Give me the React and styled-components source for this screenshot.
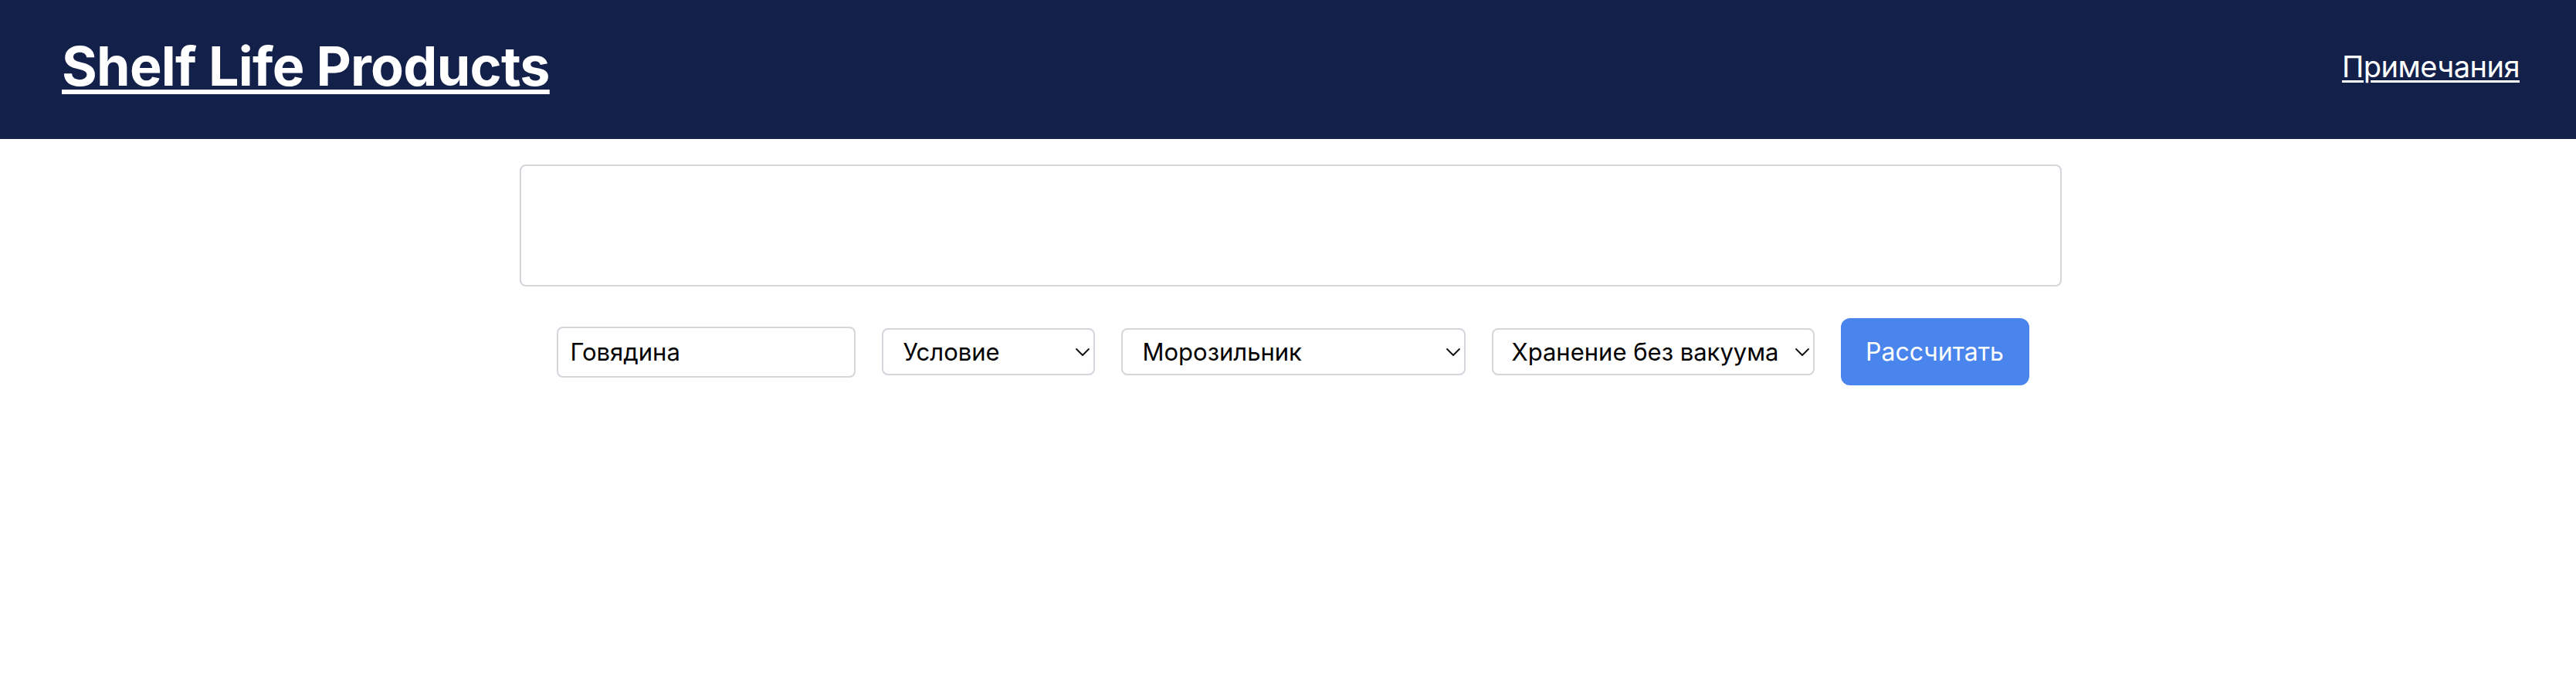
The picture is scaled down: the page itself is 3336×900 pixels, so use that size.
import styled, { createGlobalStyle } from 'styled-components';
import { ChevronDown } from 'lucide-react';

const GlobalStyle = createGlobalStyle`
  html, body {
    margin: 0;
    padding: 0;
    background: #ffffff;
  }

  body {
    font-family: Inter, "Noto Sans", "Liberation Sans", sans-serif;
  }
`;

const Header = styled.header`
  box-sizing: border-box;
  height: 180px;
  padding: 0 73px 9px 80px;
  display: flex;
  align-items: center;
  justify-content: space-between;
  background: #132049;
`;

const Title = styled.a`
  color: #ffffff;
  font-size: 70px;
  font-weight: 700;
  letter-spacing: -0.75px;
  text-decoration: underline;
  text-decoration-thickness: 6px;
  text-underline-offset: 5px;
`;

const NavLink = styled.a`
  color: #ffffff;
  font-size: 38px;
  letter-spacing: -0.5px;
  text-decoration: underline;
  text-decoration-thickness: 3px;
  text-underline-offset: 4px;
`;

const Main = styled.main`
  display: flex;
  flex-direction: column;
  align-items: center;
  padding-top: 33px;
  padding-left: 7px;
`;

const Output = styled.textarea`
  box-sizing: border-box;
  width: 1997px;
  height: 158px;
  border: 2px solid #d4d6db;
  border-radius: 8px;
  resize: none;
  outline: none;
  font-family: inherit;
`;

const Controls = styled.div`
  display: flex;
  align-items: center;
  gap: 34px;
  margin-top: 41px;
  margin-left: 5px;
`;

const TextInput = styled.input`
  box-sizing: border-box;
  width: 387px;
  height: 66px;
  padding: 0 16px;
  border: 2px solid #d4d6db;
  border-radius: 8px;
  font-family: inherit;
  font-size: 31px;
  color: #000000;
  outline: none;
`;

const SelectWrap = styled.div`
  position: relative;
  width: ${(p) => p.$width}px;
`;

const Select = styled.select`
  box-sizing: border-box;
  appearance: none;
  width: 100%;
  height: 61px;
  padding: 0 40px 0 ${(p) => p.$pad || 26}px;
  border: 2px solid #d4d6db;
  border-radius: 8px;
  background: #ffffff;
  font-family: inherit;
  font-size: 31px;
  color: #000000;
  outline: none;
`;

// chevron sits over the right end of the select
const Chevron = styled(ChevronDown)`
  position: absolute;
  right: 0;
  top: 50%;
  transform: translateY(-50%);
  pointer-events: none;
  color: #111111;
`;

const Button = styled.button`
  width: 244px;
  height: 87px;
  border: none;
  border-radius: 12px;
  background: #4a84ed;
  color: #ffffff;
  font-family: inherit;
  font-size: 32px;
  cursor: pointer;
`;

const Dropdown = ({ width, pad, options }) => (
  <SelectWrap $width={width}>
    <Select $pad={pad} defaultValue={options[0]}>
      {options.map((o) => (
        <option key={o}>{o}</option>
      ))}
    </Select>
    <Chevron size={32} strokeWidth={1.4} />
  </SelectWrap>
);

const App = () => {
  return (
    <>
      <GlobalStyle />
      <Header>
        <Title href='#'>Shelf Life Products</Title>
        <NavLink href='#'>Примечания</NavLink>
      </Header>

      <Main>
        <Output readOnly />
        <Controls>
          <TextInput defaultValue='Говядина' />
          <Dropdown width={276} options={['Условие', 'Сырое', 'Варёное']} />
          <Dropdown width={446} options={['Морозильник', 'Холодильник', 'Комнатная температура']} />
          <Dropdown width={418} pad={24} options={['Хранение без вакуума', 'Вакуумная упаковка']} />
          <Button type='button'>Рассчитать</Button>
        </Controls>
      </Main>
    </>
  );
};

export default App;
